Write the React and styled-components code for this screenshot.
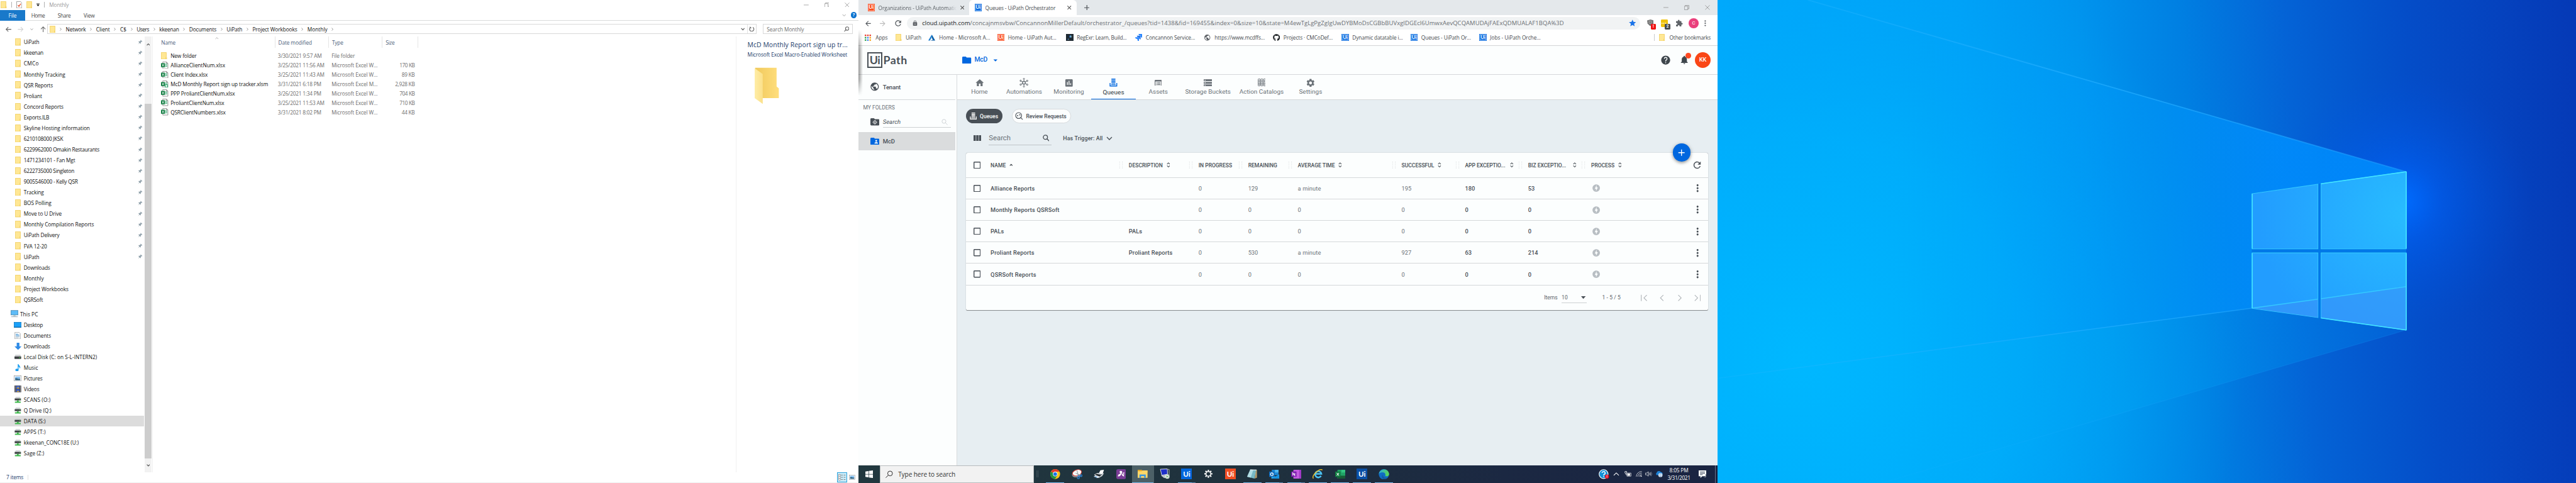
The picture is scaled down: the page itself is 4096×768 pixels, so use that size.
import React, { useLayoutEffect, useRef, useState } from 'react';
import styled, { createGlobalStyle, css } from 'styled-components';
import {
  MdHome, MdAssessment, MdSettings, MdPublic, MdArrowDropDown, MdHelp, MdNotifications,
  MdRefresh, MdMoreVert, MdOfflineBolt, MdLock, MdExtension, MdStar, MdArrowBack, MdArrowForward,
} from 'react-icons/md';
import { FaGithub } from 'react-icons/fa';

const SEGOE = '"Open Sans", "Noto Sans", sans-serif';
const ROBOTO = 'Roboto, "Liberation Sans", sans-serif';

const Global = createGlobalStyle`
  html, body { margin: 0; padding: 0; background: #fff; overflow: hidden; }
  * { box-sizing: border-box; }
  svg { display: block; flex: none; }
`;

const Stage = styled.div`
  zoom: 0.711111;
  display: flex;
  width: 5760px;
  height: 1080px;
  overflow: hidden;
  font-family: ${SEGOE};
  font-size: 11.7px;
  color: #111;
  white-space: nowrap;
`;

/* ---------- text that keeps a known width ---------- */

const FitBox = styled.span`
  display: inline-block;
  flex: none;
  width: ${(p) => p.$w}px;
  white-space: pre;
`;
const FitInner = styled.span`
  display: inline-block;
`;

function Fit({ w, children }) {
  const outer = useRef(null);
  const inner = useRef(null);
  const [spacing, setSpacing] = useState(0);
  useLayoutEffect(() => {
    const ratio = outer.current.getBoundingClientRect().width / inner.current.getBoundingClientRect().width;
    setSpacing((w - w / ratio) / String(children).length);
  }, [w, children]);
  return (
    <FitBox $w={w} ref={outer}>
      <FitInner ref={inner} style={{ letterSpacing: `${spacing.toFixed(3)}px` }}>{children}</FitInner>
    </FitBox>
  );
}

/* ---------- small drawings ---------- */

const FolderIcon = ({ w = 13, h = 16 }) => (
  <svg width={w} height={h} viewBox="0 0 13 16">
    <path d="M.5.5h11.4v10.2l.8 1v3.8H.5z" fill="#ffe794" stroke="#ecc64c" />
    <path d="M10.6 15V11.6l1.2-1" fill="none" stroke="#ecc64c" strokeWidth=".8" />
  </svg>
);
const ExcelIcon = ({ macro }) => (
  <svg width="16" height="16" viewBox="0 0 16 16">
    <path d="M4 .6h8l3.4 3.2v11.6H4z" fill="#fff" stroke="#777" strokeWidth="1.1" />
    <path d="M12 .6v3.2h3.4" fill="none" stroke="#777" />
    <path d="M10 5.5h4M10 8h4M10 10.5h4" stroke="#21a366" strokeWidth="1.2" />
    <rect y="3.5" width="9" height="9" fill="#107c41" />
    <path d="M2.4 5.4l4.2 5.2M6.6 5.4L2.4 10.6" stroke="#fff" strokeWidth="1.3" />
    {macro && <path d="M9.5 9.5h5v5.8h-5z" fill="#fff" stroke="#21a366" strokeWidth="1.6" />}
  </svg>
);
const PinIcon = () => (
  <svg width="11" height="11" viewBox="0 0 11 11">
    <path d="M6.2.4l4.2 3.8-1 .6-1-.2-1.7 2 .2 2-.9.7-2-1.8L.8 10.6 3.3 6.7 1.6 4.6l.8-.8 2.2.2 1.9-2z" fill="#8fa0aa" />
  </svg>
);
const PcIcon = () => (
  <svg width="17" height="16" viewBox="0 0 17 16">
    <rect x=".5" y="1" width="16" height="10" fill="#5ebcf8" stroke="#3f7fa6" />
    <path d="M8.5 11v2.5M5 12.8h7" stroke="#8aa" strokeWidth="1" />
    <path d="M1 15h15" stroke="#9ab" strokeWidth="1.4" />
  </svg>
);
const DesktopIcon = () => (
  <svg width="17" height="13" viewBox="0 0 17 13">
    <rect x=".5" y=".5" width="16" height="12" fill="#1aa0f8" stroke="#0a72b8" />
    <path d="M1 11.6h15" stroke="#064f86" strokeWidth="1.2" />
  </svg>
);
const DocIcon = () => (
  <svg width="14" height="16" viewBox="0 0 14 16">
    <path d="M1 .5h9l3 3v12H1z" fill="#fff" stroke="#8a8f94" />
    <path d="M3 4.5h5M3 6.5h8M3 8.5h8" stroke="#3a8fd0" strokeWidth="1.1" />
    <path d="M3 10.8h8M3 13h6" stroke="#8aa5b8" />
  </svg>
);
const DownIcon = () => (
  <svg width="16" height="16" viewBox="0 0 16 16">
    <path d="M5 0h6v8h5l-8 8-8-8h5z" fill="#2f8be6" />
  </svg>
);
const DiskIcon = () => (
  <svg width="15" height="10" viewBox="0 0 15 10">
    <path d="M2 0h11l2 4H0z" fill="#cfd2d4" />
    <rect y="4" width="15" height="5.6" rx="1" fill="#3c4043" />
    <rect x="10.5" y="6" width="2.4" height="1.6" fill="#55e055" />
  </svg>
);
const NetIcon = () => (
  <svg width="15" height="14" viewBox="0 0 15 14">
    <path d="M3 0h9l2 3.6H1z" fill="#d2d6d8" />
    <rect x=".5" y="3.6" width="14" height="4.4" fill="#3c4043" />
    <rect x="11" y="5" width="2" height="1.4" fill="#5e5" />
    <path d="M5.5 8h4v2.4H14v3H1v-3h4.5z" fill="#3fb84c" />
  </svg>
);
const MusicIcon = () => (
  <svg width="12" height="16" viewBox="0 0 12 16">
    <path d="M6 0h1.6c.4 2.5 4.4 4 4 8l-1.2 2.6c.4-3-1-4-2.6-4.6v7.2A3.6 2.8 0 1 1 6 10.6z" fill="#189df0" />
  </svg>
);
const PictureIcon = ({ w = 17, h = 13 }) => (
  <svg width={w} height={h} viewBox="0 0 17 13">
    <rect x=".5" y=".5" width="16" height="12" fill="#fff" stroke="#8d9296" />
    <rect x="3" y="2.5" width="11" height="8" fill="#86c0f2" />
    <path d="M3 10.5V6.5c3-2 5 2 11 1v3z" fill="#2c5f7c" />
  </svg>
);
const VideoIcon = () => (
  <svg width="15" height="15" viewBox="0 0 15 15">
    <rect width="15" height="15" fill="#3b3b42" />
    <rect x="3.5" y="1" width="8" height="6" fill="#4a6fd0" />
    <rect x="3.5" y="8" width="8" height="6" fill="#3a5fc8" />
    <path d="M5 7l3-4 3 4zM5 14l3-3 3 3z" fill="#d8a424" />
    <path d="M1.7 1v13M13.3 1v13" stroke="#ddd" strokeWidth="1.4" strokeDasharray="1.5 1.5" />
  </svg>
);
const Chevron = ({ s = 8, dir = 'down', c = '#555', sw = 1.4 }) => {
  const rot = { down: 0, up: 180, right: -90, left: 90 }[dir];
  return (
    <svg width={s} height={s} viewBox="0 0 10 10">
      <path d="M1 3l4 4 4-4" fill="none" stroke={c} strokeWidth={sw} transform={`rotate(${rot} 5 5)`} />
    </svg>
  );
};
const Arrow = ({ rot = 0, c = '#666', s = 13, sw = 1.5 }) => (
  <svg width={s} height={s} viewBox="0 0 13 13">
    <path d="M12.5 6.5H1.2M6 1.5l-5 5 5 5" fill="none" stroke={c} strokeWidth={sw} transform={`rotate(${rot} 6.5 6.5)`} />
  </svg>
);
const Minimise = () => <svg width="11" height="11" viewBox="0 0 11 11"><path d="M0 5.5h11" stroke="#888" /></svg>;
const Restore = () => (
  <svg width="11" height="11" viewBox="0 0 11 11">
    <path d="M.5 2.5h7.5v8H.5zM2.5 2.5v-2h8v8H8" fill="none" stroke="#888" />
  </svg>
);
const CloseX = ({ s = 11, c = '#888', sw = 1 }) => (
  <svg width={s} height={s} viewBox="0 0 11 11"><path d="M.5.5l10 10M10.5.5l-10 10" stroke={c} strokeWidth={sw} /></svg>
);
const Lens = ({ s = 13, c = '#555', sw = 1.4, flip }) => (
  <svg width={s} height={s} viewBox="0 0 14 14">
    <g transform={flip ? 'translate(14 0) scale(-1 1)' : undefined} fill="none" stroke={c} strokeWidth={sw}>
      <circle cx="5.6" cy="5.6" r="4.4" />
      <path d="M8.8 8.8l4.7 4.7" />
    </g>
  </svg>
);
const QueueIcon = ({ s = 18, c = '#0067df' }) => (
  <svg width={s} height={s} viewBox="0 0 18 18">
    <path d="M4.5 1h9M4.5 4h9M4.5 7h9M4.5 10h9" stroke={c} strokeWidth="2" />
    <path d="M1.5 10v6.5h15V10" fill="none" stroke={c} strokeWidth="2" />
    <path d="M4 13.3h10" stroke={c} strokeWidth="1.8" />
  </svg>
);
const AutomationIcon = () => (
  <svg width="20" height="21" viewBox="0 0 20 21" fill="none" stroke="#6b7278">
    <circle cx="10" cy="10.5" r="3.2" strokeWidth="2" />
    {[0, 60, 120, 180, 240, 300].map((a) => (
      <g key={a} transform={`rotate(${a} 10 10.5)`}>
        <circle cx="10" cy="2" r="1.5" strokeWidth="1.3" />
        <path d="M10 4v3" strokeWidth="1.3" />
      </g>
    ))}
  </svg>
);
const AssetIcon = () => (
  <svg width="16" height="14" viewBox="0 0 16 14">
    <rect x=".8" y=".8" width="14.4" height="12.4" rx="1" fill="none" stroke="#6b7278" strokeWidth="1.6" />
    <path d="M1 2.5h14" stroke="#6b7278" strokeWidth="2.4" />
    <path d="M3 6h1.5M3 8.3h1.5M3 10.6h1.5M5.5 6h7.5M5.5 8.3h7.5M5.5 10.6h7.5" stroke="#6b7278" strokeWidth="1.3" />
  </svg>
);
const BucketIcon = () => (
  <svg width="19" height="16" viewBox="0 0 19 16">
    <path d="M0 2.2h19M0 8h19M0 13.8h19" stroke="#6b7278" strokeWidth="4.2" />
    <path d="M2 2.2h2M2 8h2M2 13.8h2" stroke="#fff" strokeWidth="1.8" />
  </svg>
);
const CatalogIcon = () => (
  <svg width="18" height="17" viewBox="0 0 18 17" fill="none" stroke="#6b7278" strokeWidth="1.3">
    {[0, 6, 12].map((x) => (
      <g key={x}>
        <rect x={x + 0.7} y=".7" width="4.6" height="15.6" rx="1" />
        <path d={`M${x + 3} 3v6M${x + 1} 11h4`} />
        <circle cx={x + 3} cy="13.3" r=".6" />
      </g>
    ))}
  </svg>
);
const JiraIcon = () => (
  <svg width="16" height="16" viewBox="0 0 16 16">
    <path d="M7.5 0H16v8.5c-2 0-3.5-1.5-3.5-3.5V3.5H11c-2 0-3.5-1.5-3.5-3.5z" fill="#2684ff" />
    <path d="M3.8 3.8h8.4v8.4c-2 0-3.5-1.5-3.5-3.5V7.3H7.3c-2 0-3.5-1.5-3.5-3.5z" fill="#1f74ec" />
    <path d="M0 7.5h8.5V16C6.5 16 5 14.5 5 12.5V11H3.5C1.5 11 0 9.5 0 7.5z" fill="#2684ff" />
  </svg>
);
const AzureIcon = () => (
  <svg width="16" height="16" viewBox="0 0 16 16">
    <path d="M7.8 1.5L0 14.6h3.8l5-9.3z" fill="#1e7fd0" />
    <path d="M8.5 2.2l7 12.4H5l5.5-1.8-2.6-3.3z" fill="#0a5fa8" />
  </svg>
);
const AppsGrid = () => (
  <svg width="14" height="14" viewBox="0 0 14 14">
    {['#ea4335', '#ea4335', '#ea4335', '#34a853', '#4285f4', '#f5a623', '#34a853', '#4285f4', '#f5a623'].map((c, i) => (
      <rect key={i} x={(i % 3) * 5.3} y={Math.floor(i / 3) * 5.3} width="3.4" height="3.4" fill={c} />
    ))}
  </svg>
);
const BigFolder = () => (
  <svg width="56" height="84" viewBox="0 0 56 84">
    <defs>
      <linearGradient id="fBack" x1="0" x2="1"><stop offset="0" stopColor="#f0c95c" /><stop offset="1" stopColor="#ffde7c" /></linearGradient>
      <linearGradient id="fFront" x1="0" x2="1"><stop offset="0" stopColor="#ffeda6" /><stop offset="1" stopColor="#fbe08a" /></linearGradient>
    </defs>
    <path d="M1 1h48v42l5 4v22H1z" fill="url(#fBack)" />
    <path d="M0 2l18 13v67L0 69z" fill="url(#fFront)" />
  </svg>
);

/* ---------- UiPath favicon ---------- */

const UiBadge = styled.span`
  display: inline-flex;
  align-items: center;
  justify-content: center;
  flex: none;
  width: ${(p) => p.$s || 16}px;
  height: ${(p) => p.$s || 16}px;
  background: ${(p) => p.$c};
  color: #fff;
  font: 700 ${(p) => (p.$s || 16) * 0.68}px/1 Lato, sans-serif;
  ${(p) => !p.$s && css`box-shadow: inset 0 0 0 1px ${p.$c}, inset 0 0 0 2px #ffffffcc;`}
`;

/* ---------- File Explorer ---------- */

const Explorer = styled.section`
  display: flex;
  flex-direction: column;
  width: 1920px;
  height: 1080px;
  background: #fff;
  flex: none;
`;
const TitleBar = styled.div`
  display: flex;
  align-items: center;
  height: 23px;
  padding: 0 20px 2px 2px;
  color: #999;
`;
const QuickTools = styled.div`
  display: flex;
  align-items: center;
  gap: 10px;
  flex: 1;
`;
const Rule = styled.i`
  width: 1px;
  height: ${(p) => p.$h || 12}px;
  background: ${(p) => p.$c || '#b0b0b0'};
`;
const WindowButtons = styled.div`
  display: flex;
  gap: 35px;
`;
const Ribbon = styled.div`
  display: flex;
  align-items: center;
  height: 24px;
  padding-right: 4px;
  border-bottom: 1px solid #dadbdc;
  color: #444;
`;
const RibbonTab = styled.div`
  display: flex;
  align-items: center;
  justify-content: center;
  width: ${(p) => p.$w}px;
  height: 23px;
  ${(p) => p.$file && css`background: #1979ca; color: #fff;`}
`;
const HelpDot = styled.span`
  width: 14px;
  height: 14px;
  margin-left: 10px;
  border-radius: 50%;
  background: #0c73cf;
  color: #fff;
  font-size: 10px;
  font-weight: 700;
  line-height: 14px;
  text-align: center;
`;
const AddressRow = styled.div`
  display: flex;
  align-items: center;
  height: 35px;
  padding: 1px 13px 0 12px;
`;
const NavArrows = styled.div`
  display: flex;
  align-items: center;
  width: 94px;
  gap: 15px;
`;
const AddressBox = styled.div`
  display: flex;
  align-items: center;
  width: 1588px;
  height: 22px;
  padding-left: 4px;
  border: 1px solid #d9d9d9;
`;
const Crumbs = styled.div`
  display: flex;
  align-items: center;
  flex: 1;
`;
const CrumbSep = styled.span`
  display: flex;
  justify-content: center;
  width: 22.8px;
`;
const BoxButton = styled.span`
  display: flex;
  align-items: center;
  justify-content: center;
  width: 20px;
  height: 20px;
  ${(p) => p.$ruled && css`border-left: 1px solid #e3e3e3;`}
`;
const SearchBox = styled.div`
  display: flex;
  align-items: center;
  justify-content: space-between;
  width: 202px;
  height: 22px;
  margin-left: 13px;
  padding: 0 7px 0 8px;
  border: 1px solid #d9d9d9;
  color: #6d6d6d;
`;
const ExplorerBody = styled.div`
  display: flex;
  height: 974px;
`;
const Tree = styled.div`
  width: 323px;
  height: 974px;
`;
const TreeRow = styled.div`
  display: flex;
  align-items: center;
  width: 322px;
  height: 24px;
  padding: 0 3px 0 ${(p) => (p.$root ? 23 : 31)}px;
  margin-top: ${(p) => (p.$root ? 8 : 0)}px;
  background: ${(p) => (p.$active ? '#dcdcdc' : 'transparent')};
`;
const TreeIcon = styled.span`
  display: flex;
  justify-content: center;
  width: 18px;
  margin-right: 4px;
`;
const TreeLabel = styled.span`
  flex: 1;
`;
const ScrollBar = styled.div`
  display: flex;
  flex-direction: column;
  align-items: center;
  justify-content: space-between;
  width: 16px;
  height: 974px;
  padding: 14px 0 12px;
  margin-right: 2px;
  background: linear-gradient(#f2f2f2 0 151px, #cdcdcd 151px 944px, #f2f2f2 944px);
`;
const FileList = styled.div`
  width: 1304px;
  border-left: 1px solid #f0f0f0;
`;
const ListHead = styled.div`
  display: flex;
  height: 25px;
  padding-left: 11px;
  margin-bottom: 7px;
  color: #4c607a;
`;
const HeadCell = styled.div`
  display: flex;
  align-items: center;
  position: relative;
  width: ${(p) => p.$w}px;
  padding-left: 7px;
  border-right: 1px solid #e5e5e5;
`;
const SortMark = styled.span`
  position: absolute;
  top: -1px;
  left: 128px;
`;
const FileRow = styled.div`
  display: grid;
  grid-template-columns: 21px 240px 120px 120px 66px;
  align-items: center;
  height: 21px;
  padding-left: 18px;
  color: #6d6d6d;
  > :nth-child(2) { color: #111; }
  > :last-child { text-align: right; justify-self: end; }
`;
const Preview = styled.aside`
  width: 275px;
  padding: 8px 0 0 25px;
  border-left: 1px solid #f0f0f0;
  color: #1c3d6b;
`;
const PreviewTitle = styled.div`
  height: 22px;
  font-size: 14.6px;
  line-height: 20px;
`;
const PreviewType = styled.div`
  height: 38px;
  line-height: 21px;
`;
const PreviewThumb = styled.div`
  padding-left: 16px;
`;
const StatusBar = styled.div`
  display: flex;
  align-items: center;
  flex: 1;
  padding: 0 8px 0 14px;
  gap: 10px;
  color: #1c3d6b;
  border-bottom: 1px solid #eee;
`;
const ViewSwitch = styled.div`
  display: flex;
  align-items: center;
  gap: 4px;
  margin-left: auto;
`;
const ViewActive = styled.span`
  display: flex;
  align-items: center;
  justify-content: center;
  width: 22px;
  height: 22px;
  background: #cbecf9;
  border: 1px solid #2aa0da;
`;

const QUICK = [
  ['UiPath', 35], ['kkeenan', 44], ['CMCo', 34], ['Monthly Tracking', 93], ['QSR Reports', 65], ['Proliant', 41],
  ['Concord Reports', 89], ['Exports.ILB', 57], ['Skyline Hosting information', 148], ['6210108000 JKSK', 88],
  ['6229962000 Omakin Restaurants', 169], ['1471234101 - Fan Mgt', 115], ['6222735000 Singleton', 113],
  ['9005546000 - Kelly QSR', 121], ['Tracking', 45], ['BOS Polling', 62], ['Move to U Drive', 85],
  ['Monthly Compilation Reports', 157], ['UiPath Delivery', 80], ['FVA 12-20', 52], ['UiPath', 35],
  ['Downloads', 59], ['Monthly', 45], ['Project Workbooks', 100], ['QSRSoft', 43],
];
const THIS_PC = [
  ['Desktop', 43, DesktopIcon], ['Documents', 61, DocIcon], ['Downloads', 59, DownIcon],
  ['Local Disk (C: on S-L-INTERN2)', 164, DiskIcon], ['Music', 32, MusicIcon], ['Pictures', 42, PictureIcon],
  ['Videos', 35, VideoIcon], ['SCANS (O:)', 60, NetIcon], ['Q Drive (Q:)', 62, NetIcon], ['DATA (S:)', 49, NetIcon],
  ['APPS (T:)', 49, NetIcon], ['kkeenan_CONC18E (U:)', 123, NetIcon], ['Sage (Z:)', 46, NetIcon],
];
const CRUMBS = [
  ['Network', 45], ['Client', 31], ['C$', 14], ['Users', 28], ['kkeenan', 44], ['Documents', 61], ['UiPath', 35],
  ['Project Workbooks', 100], ['Monthly', 45],
];
const FILES = [
  ['New folder', 58, '3/30/2021 9:57 AM', 98, 'File folder', 52, '', 0, 'folder'],
  ['AllianceClientNum.xlsx', 122, '3/25/2021 11:56 AM', 104, 'Microsoft Excel W...', 103, '170 KB', 34],
  ['Client Index.xlsx', 83, '3/25/2021 11:43 AM', 104, 'Microsoft Excel W...', 103, '89 KB', 29],
  ['McD Monthly Report sign up tracker.xlsm', 218, '3/31/2021 6:18 PM', 97, 'Microsoft Excel M...', 103, '2,928 KB', 44, 'macro'],
  ['PPP ProliantClientNum.xlsx', 144, '3/26/2021 1:34 PM', 97, 'Microsoft Excel W...', 103, '704 KB', 34],
  ['ProliantClientNum.xlsx', 120, '3/25/2021 11:53 AM', 104, 'Microsoft Excel W...', 103, '710 KB', 34],
  ['QSRClientNumbers.xlsx', 123, '3/31/2021 8:02 PM', 97, 'Microsoft Excel W...', 103, '44 KB', 29],
];

function FileExplorer() {
  return (
    <Explorer>
      <TitleBar>
        <QuickTools>
          <FolderIcon />
          <Rule />
          <svg width="13" height="16" viewBox="0 0 13 16">
            <path d="M.6.6h8.8l3 3v11.8H.6z" fill="#fff" stroke="#777" />
            <path d="M3.5 8.5l2.3 3 4-6" fill="none" stroke="#e5502c" strokeWidth="1.8" />
          </svg>
          <FolderIcon />
          <svg width="7" height="7" viewBox="0 0 7 7"><path d="M0 .8h7M.8 3.3h5.4L3.5 6.5z" stroke="#111" strokeWidth=".9" fill="#111" /></svg>
          <Rule />
          <Fit w={44}>Monthly</Fit>
        </QuickTools>
        <WindowButtons><Minimise /><Restore /><CloseX /></WindowButtons>
      </TitleBar>
      <Ribbon>
        <RibbonTab $file $w={56}><Fit w={18}>File</Fit></RibbonTab>
        <RibbonTab $w={58}><Fit w={30}>Home</Fit></RibbonTab>
        <RibbonTab $w={59}><Fit w={29}>Share</Fit></RibbonTab>
        <RibbonTab $w={53}><Fit w={25}>View</Fit></RibbonTab>
        <QuickTools />
        <Chevron s={9} c="#999" />
        <HelpDot>?</HelpDot>
      </Ribbon>
      <AddressRow>
        <NavArrows>
          <Arrow />
          <Arrow rot={180} c="#d2d2d2" />
          <Chevron s={7} c="#777" />
          <Arrow rot={90} />
        </NavArrows>
        <AddressBox>
          <FolderIcon />
          <Crumbs>
            <CrumbSep><Chevron s={7} dir="right" c="#666" /></CrumbSep>
            {CRUMBS.map(([t, w]) => (
              <React.Fragment key={t}>
                <Fit w={w}>{t}</Fit>
                <CrumbSep><Chevron s={7} dir="right" c="#666" /></CrumbSep>
              </React.Fragment>
            ))}
          </Crumbs>
          <BoxButton><Chevron s={9} sw={2} c="#666" /></BoxButton>
          <BoxButton $ruled>
            <svg width="12" height="12" viewBox="0 0 12 12">
              <path d="M8.5 2A4.8 4.8 0 1 1 3 2.4" fill="none" stroke="#666" strokeWidth="1.6" />
              <path d="M2 0v4h4z" fill="#666" />
            </svg>
          </BoxButton>
        </AddressBox>
        <SearchBox><Fit w={83}>Search Monthly</Fit><Lens flip s={12} sw={1.8} c="#666" /></SearchBox>
      </AddressRow>
      <ExplorerBody>
        <Tree>
          {QUICK.map(([t, w], i) => (
            <TreeRow key={i}>
              <TreeIcon><FolderIcon /></TreeIcon>
              <TreeLabel><Fit w={w}>{t}</Fit></TreeLabel>
              {i < 21 && <PinIcon />}
            </TreeRow>
          ))}
          <TreeRow $root>
            <TreeIcon><PcIcon /></TreeIcon>
            <Fit w={40}>This PC</Fit>
          </TreeRow>
          {THIS_PC.map(([t, w, Icon]) => (
            <TreeRow key={t} $active={t === 'DATA (S:)'}>
              <TreeIcon><Icon /></TreeIcon>
              <Fit w={w}>{t}</Fit>
            </TreeRow>
          ))}
        </Tree>
        <ScrollBar><Chevron dir="up" sw={2} /><Chevron sw={2} /></ScrollBar>
        <FileList>
          <ListHead>
            <HeadCell $w={262}><Fit w={32}>Name</Fit><SortMark><Chevron dir="up" s={8} c="#777" sw={1} /></SortMark></HeadCell>
            <HeadCell $w={120}><Fit w={75}>Date modified</Fit></HeadCell>
            <HeadCell $w={120}><Fit w={25}>Type</Fit></HeadCell>
            <HeadCell $w={80}><Fit w={20}>Size</Fit></HeadCell>
          </ListHead>
          {FILES.map(([name, nw, date, dw, type, tw, size, sw, kind]) => (
            <FileRow key={name}>
              {kind === 'folder' ? <FolderIcon /> : <ExcelIcon macro={kind === 'macro'} />}
              <Fit w={nw}>{name}</Fit>
              <Fit w={dw}>{date}</Fit>
              <Fit w={tw}>{type}</Fit>
              {size ? <Fit w={sw}>{size}</Fit> : <i />}
            </FileRow>
          ))}
        </FileList>
        <Preview>
          <PreviewTitle><Fit w={224}>McD Monthly Report sign up tr...</Fit></PreviewTitle>
          <PreviewType><Fit w={223}>Microsoft Excel Macro-Enabled Worksheet</Fit></PreviewType>
          <PreviewThumb><BigFolder /></PreviewThumb>
        </Preview>
      </ExplorerBody>
      <StatusBar>
        <Fit w={38}>7 items</Fit>
        <Rule $c="#e2e2e2" />
        <ViewSwitch>
          <ViewActive>
            <svg width="16" height="14" viewBox="0 0 16 14">
              <rect x=".5" y=".5" width="4" height="13" fill="#fff" stroke="#888" />
              <path d="M1 4.5h3M1 9.5h3M6 2h4M6 7h4M6 12h4M12 2h4M12 7h4M12 12h4" stroke="#555" />
            </svg>
          </ViewActive>
          <PictureIcon w={14} h={11} />
        </ViewSwitch>
      </StatusBar>
    </Explorer>
  );
}

/* ---------- Browser ---------- */

const Monitor = styled.section`
  position: relative;
  display: flex;
  flex-direction: column;
  width: 1920px;
  height: 1080px;
  flex: none;
`;
const EdgeShadow = styled.div`
  position: absolute;
  left: 0;
  top: 66px;
  width: 10px;
  height: 148px;
  background: linear-gradient(90deg, #00000066, #00000000);
  mask-image: linear-gradient(transparent, #000 30%, #000 75%, transparent);
`;
const TabStrip = styled.div`
  display: flex;
  align-items: center;
  height: 34px;
  padding-right: 17px;
  background: #e4e8eb;
  color: #5a5f64;
`;
const BrowserTab = styled.div`
  display: flex;
  align-items: center;
  width: ${(p) => p.$w}px;
  height: 34px;
  padding: 0 11px 0 ${(p) => p.$pl}px;
  gap: 8px;
  ${(p) => p.$active && css`background: #fff; border-radius: 8px 8px 0 0; color: #45494d;`}
`;
const TabTitle = styled.span`
  flex: 1;
  overflow: hidden;
  ${(p) => p.$fade && css`mask-image: linear-gradient(90deg, #000 88%, transparent);`}
`;
const TabSpace = styled.div`
  flex: 1;
  padding-left: 17px;
`;
const Toolbar = styled.div`
  display: flex;
  align-items: center;
  height: 36px;
  background: #fff;
  padding-left: 12px;
`;
const ToolIcons = styled.div`
  display: flex;
  align-items: center;
  gap: 15px;
  width: 96px;
`;
const Omnibox = styled.div`
  display: flex;
  align-items: center;
  width: 1640px;
  height: 28px;
  padding: 0 8px 0 11px;
  border-radius: 14px;
  background: #f1f3f4;
  font-size: 13.3px;
  color: #6a6e73;
`;
const UrlText = styled.div`
  display: flex;
  flex: 1;
  margin-left: 9px;
  > :first-child { color: #202124; }
`;
const Extensions = styled.div`
  display: flex;
  align-items: center;
  gap: 16px;
  padding-left: 14px;
`;
const ExtIcon = styled.span`
  position: relative;
  display: flex;
  align-items: center;
  justify-content: center;
  width: 16px;
  height: 16px;
  border-radius: 2px;
  background: ${(p) => p.$bg || 'transparent'};
  color: #fff;
`;
const ExtBadge = styled.b`
  position: absolute;
  left: 9px;
  top: 10px;
  width: 12px;
  height: 12px;
  border-radius: 2px;
  background: ${(p) => p.$bg};
  font: 700 9px/12px ${ROBOTO};
  text-align: center;
`;
const Profile = styled.span`
  width: 22px;
  height: 22px;
  margin: 0 -3px;
  border-radius: 50%;
  background: #ea3f7c;
  color: #fff;
  font: 11px/22px ${ROBOTO};
  text-align: center;
`;
const Bookmarks = styled.div`
  display: flex;
  align-items: center;
  height: 33px;
  padding: 0 15px 4px 14px;
  background: #fff;
  border-bottom: 1px solid #d3d5d7;
  color: #45494d;
`;
const Bookmark = styled.div`
  display: flex;
  align-items: center;
  gap: ${(p) => p.$gap || 8}px;
  width: ${(p) => p.$w}px;
`;
const OtherBookmarks = styled.div`
  display: flex;
  align-items: center;
  gap: 10px;
  margin-left: auto;
`;
const RegexTile = styled.span`
  width: 16px;
  height: 16px;
  background: #1f2a33;
  color: #7cc4f4;
  font: 700 13px/16px ${ROBOTO};
  text-align: center;
`;

const AppHeader = styled.header`
  display: flex;
  align-items: center;
  height: 64px;
  padding: 0 15px 0 19px;
  background: #fcfefe;
  border-bottom: 1px solid #d5d8da;
`;
const Logo = styled.div`
  display: flex;
  align-items: center;
  gap: 2px;
  width: 213px;
  color: #484f56;
  font: 700 25px/1 Lato, sans-serif;
`;
const LogoBox = styled.span`
  display: flex;
  align-items: center;
  justify-content: center;
  width: 34px;
  height: 34px;
  border: 3px solid #484f56;
`;
const FolderPicker = styled.div`
  display: flex;
  align-items: center;
  flex: 1;
  gap: 7px;
  color: #0067df;
  font: 500 14.5px/1 ${ROBOTO};
`;
const HeaderActions = styled.div`
  display: flex;
  align-items: center;
  color: #3e464c;
`;
const Bell = styled.span`
  position: relative;
  margin: 0 13px 0 17px;
`;
const BellDot = styled.i`
  position: absolute;
  right: -4px;
  top: -4px;
  width: 12px;
  height: 12px;
  border-radius: 50%;
  background: #ff4a22;
`;
const Avatar = styled.span`
  width: 35px;
  height: 35px;
  border-radius: 50%;
  background: #fa4616;
  color: #fff;
  font: 500 13px/35px ${ROBOTO};
  text-align: center;
`;
const AppBody = styled.div`
  display: flex;
  height: 873px;
  background: #e7eef2;
  font-family: ${ROBOTO};
  color: #484f56;
`;
const Side = styled.nav`
  width: 220px;
  background: #fcfefe;
  border-right: 1px solid #d8dbdd;
  font-size: 13.3px;
  font-weight: 500;
`;
const SideRow = styled.div`
  display: flex;
  align-items: center;
  gap: 8px;
  width: 216px;
  height: ${(p) => p.$h}px;
  padding-left: 26px;
  ${(p) => p.$ruled && css`padding-left: 25px; gap: 7px; border-bottom: 1px solid #d5d8da;`}
  ${(p) => p.$active && css`margin-top: 7px; background: #dadcdd;`}
`;
const SideHeading = styled.div`
  height: 34px;
  padding-left: 10px;
  font-size: 12px;
  font-weight: 400;
  line-height: 34px;
  color: #6b7278;
`;
const SideSearch = styled.div`
  display: flex;
  align-items: center;
  justify-content: space-between;
  width: 152px;
  height: 24px;
  padding-right: 7px;
  border-bottom: 1px solid #cdd0d2;
  font-style: italic;
  font-weight: 400;
`;
const Main = styled.main`
  flex: 1;
`;
const NavTabs = styled.div`
  display: flex;
  height: 57px;
  background: #fcfefe;
  border-bottom: 1px solid #d5d8da;
`;
const NavTab = styled.div`
  display: flex;
  flex-direction: column;
  align-items: center;
  justify-content: space-between;
  width: ${(p) => p.$w}px;
  padding: 6px 0 ${(p) => (p.$active ? 5 : 7)}px;
  color: ${(p) => (p.$active ? '#273139' : '#6b7278')};
  font-size: 14px;
  line-height: 18px;
  ${(p) => p.$active && css`border-bottom: 2px solid #0067df;`}
`;
const NavIcon = styled.span`
  display: flex;
  align-items: center;
  height: 24px;
`;
const Pills = styled.div`
  display: flex;
  gap: 20px;
  padding: 20px 0 0 20px;
`;
const Pill = styled.div`
  display: flex;
  align-items: center;
  gap: 7px;
  height: 32px;
  width: ${(p) => p.$w}px;
  padding-left: 8px;
  border-radius: 16px;
  font-size: 12px;
  font-weight: 500;
  color: ${(p) => (p.$dark ? '#fff' : '#484f56')};
  background: ${(p) => (p.$dark ? '#484f56' : '#fcfefe')};
  ${(p) => !p.$dark && css`border: 1px solid #d7dadd; padding-left: 6px;`}
`;
const Filters = styled.div`
  display: flex;
  align-items: center;
  height: 50px;
  margin: 8px 0 8px 37px;
`;
const FilterSearch = styled.div`
  display: flex;
  align-items: center;
  justify-content: space-between;
  width: 140px;
  height: 32px;
  margin: 0 26px 0 17px;
  padding-right: 5px;
  border-bottom: 1px solid #bfc5c9;
  font-size: 16px;
  color: #6b7278;
`;
const TriggerFilter = styled.div`
  display: flex;
  align-items: center;
  gap: 8px;
  font-size: 12.5px;
  font-weight: 500;
`;
const Card = styled.div`
  position: relative;
  width: 1660px;
  height: 352px;
  margin-left: 20px;
  background: #fcfefe;
  border-radius: 4px;
  box-shadow: 0 1px 1px #00000066, 0 0 2px #0000002e;
`;
const TableRow = styled.div`
  display: grid;
  grid-template-columns: 38px 309px 156px 111px 111px 232px 142px 141px 141px 225px 26px;
  align-items: center;
  height: ${(p) => (p.$head ? 56 : 48)}px;
  padding-left: 17px;
  border-bottom: 1px solid #d5d8da;
  font-size: ${(p) => (p.$head ? 12 : 13)}px;
  font-weight: ${(p) => (p.$head ? 500 : 400)};
`;
const HeadLabel = styled.div`
  display: flex;
  align-items: center;
  gap: ${(p) => p.$gap || 5}px;
`;
const Grip = styled.svg`
  margin: 0 ${(p) => 12 - (p.$gap || 5)}px 0 -22px;
`;
const Cell = styled.div`
  padding-left: ${(p) => p.$pl || 0}px;
  font-weight: ${(p) => (p.$strong ? 500 : 400)};
  color: ${(p) => (p.$strong ? '#484f56' : '#6b7278')};
`;
const TableFoot = styled.div`
  display: flex;
  align-items: center;
  justify-content: flex-end;
  height: 56px;
  padding-right: 17px;
  font-size: 12px;
  color: #5b6268;
`;
const PageSize = styled.div`
  display: flex;
  align-items: center;
  justify-content: space-between;
  width: 56px;
  height: 24px;
  margin: 0 35px 0 9px;
  padding-right: 3px;
  border-bottom: 1px solid #cdd0d2;
`;
const Pager = styled.div`
  display: flex;
  gap: 23.5px;
  margin-left: 45px;
`;
const Fab = styled.button`
  position: absolute;
  right: 40px;
  top: -21px;
  display: flex;
  align-items: center;
  justify-content: center;
  width: 40px;
  height: 40px;
  padding: 0;
  border: 0;
  border-radius: 50%;
  background: #0067df;
  color: #fff;
  box-shadow: 0 3px 6px #0000004d, 0 1px 10px #0000002b;
`;

const BOOKMARKS = [
  [<AzureIcon />, 'Home - Microsoft A...', 114],
  [<UiBadge $c="#fa4616">Ui</UiBadge>, 'Home - UiPath Aut...', 108],
  [<RegexTile>.*</RegexTile>, 'RegExr: Learn, Build...', 111],
  [<JiraIcon />, 'Concannon Service...', 110],
  [<MdPublic size={16} color="#5f6368" />, 'https://www.mcdffs...', 112],
  [<FaGithub size={16} color="#1b1f23" />, 'Projects · CMCoDef...', 110],
  [<UiBadge $c="#0067df">Ui</UiBadge>, 'Dynamic datatable i...', 113],
  [<UiBadge $c="#0067df">Ui</UiBadge>, 'Queues - UiPath Or...', 111],
  [<UiBadge $c="#0067df">Ui</UiBadge>, 'Jobs - UiPath Orche...', 113],
];
const NAV = [
  ['Home', 37, 100, <MdHome size={22} />],
  ['Automations', 80, 100, <AutomationIcon />],
  ['Monitoring', 68, 100, <MdAssessment size={22} />],
  ['Queues', 48, 100, <QueueIcon />],
  ['Assets', 43, 100, <AssetIcon />],
  ['Storage Buckets', 102, 122, <BucketIcon />],
  ['Action Catalogs', 99, 118, <CatalogIcon />],
  ['Settings', 52, 101, <MdSettings size={22} />],
];
const HEADS = [
  ['NAME', 34, 'up', 8], ['DESCRIPTION', 76, 'both', 8], ['IN PROGRESS', 75], ['REMAINING', 65],
  ['AVERAGE TIME', 83, 'both', 8], ['SUCCESSFUL', 73, 'both', 8], ['APP EXCEPTIO...', 90, 'both', 11],
  ['BIZ EXCEPTIO...', 85, 'both', 15], ['PROCESS', 52, 'both', 8],
];
const ROWS = [
  ['Alliance Reports', 99, '', 0, '0', '129', 'a minute', '195', '180', '53'],
  ['Monthly Reports QSRSoft', 154, '', 0, '0', '0', '0', '0', '0', '0'],
  ['PALs', 30, 'PALs', 30, '0', '0', '0', '0', '0', '0'],
  ['Proliant Reports', 98, 'Proliant Reports', 98, '0', '530', 'a minute', '927', '63', '214'],
  ['QSRSoft Reports', 102, '', 0, '0', '0', '0', '0', '0', '0'],
];
const PAGER_PATHS = [
  'M1 1v14M13.5 1.5L7 8l6.5 6.5',
  'M11 1.5L4.500 8l6.5 6.5',
  'M5 1.5L11.500 8 5 14.5',
  'M15 1v14M2.5 1.5L9 8l-6.5 6.5',
];

const SortIcon = ({ kind }) => (
  <svg width="8" height="12" viewBox="0 0 8 12" fill="none" stroke="#484f56" strokeWidth="1.5">
    {kind === 'both' ? <path d="M1 4.3l3-3 3 3M1 7.7l3 3 3-3" /> : <path d="M1 7.6l3-3 3 3" />}
  </svg>
);
const GripDots = ({ gap }) => (
  <Grip width="10" height="15" viewBox="0 0 10 15" $gap={gap} fill="#dcdfe1">
    {[1, 5.5, 10, 14].map((y) => [2, 8].map((x) => <circle key={`${x}-${y}`} cx={x} cy={y} r="1" />))}
  </Grip>
);
const CheckBox = () => (
  <svg width="16" height="16" viewBox="0 0 16 16"><rect x="1" y="1" width="14" height="14" rx="1" fill="none" stroke="#484f56" strokeWidth="2" /></svg>
);

function QueueTable() {
  return (
    <Card>
      <TableRow $head>
        <CheckBox />
        {HEADS.map(([t, w, sort, gap], i) => (
          <HeadLabel key={t} $gap={gap}>
            {i > 0 && <GripDots gap={gap} />}
            <Fit w={w}>{t}</Fit>
            {sort && <SortIcon kind={sort} />}
          </HeadLabel>
        ))}
        <MdRefresh size={24} />
      </TableRow>
      {ROWS.map(([name, nw, desc, dw, ...nums]) => (
        <TableRow key={name}>
          <CheckBox />
          <Cell $strong><Fit w={nw}>{name}</Fit></Cell>
          <Cell $strong>{desc && <Fit w={dw}>{desc}</Fit>}</Cell>
          {nums.map((n, i) => (
            <Cell key={i} $strong={i > 3}>{n.length > 4 ? <Fit w={52}>{n}</Fit> : n}</Cell>
          ))}
          <Cell $pl={2}><MdOfflineBolt size={20} color="#b8bec3" /></Cell>
          <MdMoreVert size={26} />
        </TableRow>
      ))}
      <TableFoot>
        <Fit w={30}>Items</Fit>
        <PageSize><Fit w={14}>10</Fit><svg width="10" height="6" viewBox="0 0 10 6"><path d="M0 0h10L5 6z" fill="#484f56" /></svg></PageSize>
        <Fit w={41}>1 - 5 / 5</Fit>
        <Pager>
          {PAGER_PATHS.map((d) => (
            <svg key={d} width="16" height="16" viewBox="0 0 16 16" fill="none" stroke="#b0b5b9" strokeWidth="1.6"><path d={d} /></svg>
          ))}
        </Pager>
      </TableFoot>
      <Fab><svg width="16" height="16" viewBox="0 0 16 16"><path d="M8 1v14M1 8h14" stroke="#fff" strokeWidth="2" /></svg></Fab>
    </Card>
  );
}

function Browser() {
  return (
    <>
      <TabStrip>
        <BrowserTab $w={247} $pl={20}>
          <UiBadge $c="#fa4616">Ui</UiBadge>
          <TabTitle $fade><Fit w={176}>Organizations - UiPath Automatic</Fit></TabTitle>
          <CloseX s={9} c="#555" sw={1.8} />
        </BrowserTab>
        <BrowserTab $active $w={240} $pl={12}>
          <UiBadge $c="#0067df">Ui</UiBadge>
          <TabTitle><Fit w={157}>Queues - UiPath Orchestrator</Fit></TabTitle>
          <CloseX s={9} c="#555" sw={1.8} />
        </BrowserTab>
        <TabSpace><svg width="12" height="12" viewBox="0 0 12 12"><path d="M6 0v12M0 6h12" stroke="#4d5257" strokeWidth="1.7" /></svg></TabSpace>
        <WindowButtons><Minimise /><Restore /><CloseX /></WindowButtons>
      </TabStrip>
      <Toolbar>
        <ToolIcons><MdArrowBack size={18} color="#50555a" /><MdArrowForward size={18} color="#bbb" /><MdRefresh size={20} color="#50555a" /></ToolIcons>
        <Omnibox>
          <MdLock size={14} color="#5f6368" />
          <UrlText>
            <Fit w={107}>cloud.uipath.com</Fit>
            <Fit w={1328}>/concajnmsvbw/ConcannonMillerDefault/orchestrator_/queues?tid=1438&amp;fid=169455&amp;index=0&amp;size=10&amp;state=M4ewTgLgPgZglgUwDYBMoDsCGBbBUVxgIDGEcl6UmwxAevQCQAMUDAjFAExQDMUALAF1BQA%3D</Fit>
          </UrlText>
          <MdStar size={19} color="#1a73e8" />
        </Omnibox>
        <Extensions>
          <ExtIcon>
            <svg width="15" height="16" viewBox="0 0 15 16"><path d="M0 2l7.5-2L15 2v6l-4 6H6L1 9z" fill="#777" /><circle cx="7" cy="6" r="3" fill="none" stroke="#bbb" /></svg>
            <ExtBadge $bg="#f01414">!</ExtBadge>
          </ExtIcon>
          <ExtIcon $bg="#f0c20c">
            <svg width="12" height="3" viewBox="0 0 12 3"><path d="M0 1.5h12" stroke="#fff" strokeWidth="2" strokeDasharray="2 2" /></svg>
            <ExtBadge $bg="#484c50">2</ExtBadge>
          </ExtIcon>
          <MdExtension size={17} color="#5f6368" />
          <Profile>C</Profile>
          <svg width="4" height="14" viewBox="0 0 4 14" fill="#5f6368"><circle cx="2" cy="2" r="1.6" /><circle cx="2" cy="7" r="1.6" /><circle cx="2" cy="12" r="1.6" /></svg>
        </Extensions>
      </Toolbar>
      <Bookmarks>
        <Bookmark $w={69} $gap={10}><AppsGrid /><Fit w={27}>Apps</Fit></Bookmark>
        <Bookmark $w={73} $gap={9}><FolderIcon /><Fit w={35}>UiPath</Fit></Bookmark>
        {BOOKMARKS.map(([icon, t, w]) => (
          <Bookmark key={t} $w={154}>{icon}<Fit w={w}>{t}</Fit></Bookmark>
        ))}
        <OtherBookmarks><Rule $h={16} $c="#c8cacc" /><FolderIcon /><Fit w={92}>Other bookmarks</Fit></OtherBookmarks>
      </Bookmarks>
      <AppHeader>
        <Logo><LogoBox><Fit w={23}>Ui</Fit></LogoBox><Fit w={54}>Path</Fit></Logo>
        <FolderPicker>
          <svg width="20" height="16" viewBox="0 0 20 16"><path d="M2 0h6l2 2h8a2 2 0 0 1 2 2v10a2 2 0 0 1-2 2H2a2 2 0 0 1-2-2V2a2 2 0 0 1 2-2z" fill="#0067df" /></svg>
          <Fit w={29}>McD</Fit>
          <MdArrowDropDown size={22} />
        </FolderPicker>
        <HeaderActions>
          <MdHelp size={24} />
          <Bell><MdNotifications size={23} /><BellDot /></Bell>
          <Avatar>KK</Avatar>
        </HeaderActions>
      </AppHeader>
      <AppBody>
        <Side>
          <SideRow $h={56} $ruled><MdPublic size={22} /><Fit w={40}>Tenant</Fit></SideRow>
          <SideHeading><Fit w={71}>MY FOLDERS</Fit></SideHeading>
          <SideRow $h={32}>
            <svg width="20" height="16" viewBox="0 0 20 16">
              <path d="M2 0h6l2 2h8a2 2 0 0 1 2 2v10a2 2 0 0 1-2 2H2a2 2 0 0 1-2-2V2a2 2 0 0 1 2-2z" fill="#484f56" />
              <circle cx="10" cy="9" r="3.4" fill="none" stroke="#fff" strokeWidth="1.2" /><circle cx="10" cy="9" r="1.2" fill="#fff" />
              <path d="M10 4v2M10 12v2M5 9h2M13 9h2" stroke="#fff" />
            </svg>
            <SideSearch><Fit w={40}>Search</Fit><Lens s={14} c="#c8cdd0" sw={1.2} /></SideSearch>
          </SideRow>
          <SideRow $h={40} $active>
            <svg width="20" height="16" viewBox="0 0 20 16">
              <path d="M2 0h6l2 2h8a2 2 0 0 1 2 2v10a2 2 0 0 1-2 2H2a2 2 0 0 1-2-2V2a2 2 0 0 1 2-2z" fill="#0067df" />
              <circle cx="13" cy="7" r="2" fill="#fff" /><path d="M9 13c0-4 8-4 8 0z" fill="#fff" />
            </svg>
            <Fit w={27}>McD</Fit>
          </SideRow>
        </Side>
        <Main>
          <NavTabs>
            {NAV.map(([t, w, tab, icon]) => (
              <NavTab key={t} $w={tab} $active={t === 'Queues'}><NavIcon>{icon}</NavIcon><Fit w={w}>{t}</Fit></NavTab>
            ))}
          </NavTabs>
          <Pills>
            <Pill $dark $w={82}><QueueIcon s={16} c="#fff" /><Fit w={41}>Queues</Fit></Pill>
            <Pill $w={133}>
              <svg width="18" height="18" viewBox="0 0 18 18" fill="none" stroke="#484f56" strokeWidth="1.6">
                <circle cx="8" cy="8" r="6.6" /><path d="M12.5 12.5L17 17M5.5 10V8h1.5M9 6h2v2" />
              </svg>
              <Fit w={90}>Review Requests</Fit>
            </Pill>
          </Pills>
          <Filters>
            <svg width="17" height="13" viewBox="0 0 17 13"><path d="M0 0h5v13H0zM6 0h5v13H6zM12 0h5v13h-5z" fill="#484f56" /></svg>
            <FilterSearch><Fit w={49}>Search</Fit><Lens s={15} sw={1.8} c="#484f56" /></FilterSearch>
            <TriggerFilter><Fit w={89}>Has Trigger: All</Fit><Chevron s={14} c="#484f56" sw={1.3} /></TriggerFilter>
          </Filters>
          <QueueTable />
        </Main>
      </AppBody>
    </>
  );
}

/* ---------- Taskbar ---------- */

const Bar = styled.footer`
  display: flex;
  height: 40px;
  background: linear-gradient(90deg, #21383f, #1f313d 45%, #1b2842 75%, #1a2442);
  color: #fff;
`;
const Start = styled.div`
  display: flex;
  align-items: center;
  justify-content: center;
  width: 48px;
`;
const TaskSearch = styled.div`
  display: flex;
  align-items: center;
  gap: 11px;
  width: 344px;
  height: 40px;
  padding-left: 11px;
  background: #f2f2f2;
  border: 1px solid #b8bcbe;
  color: #333;
  font-size: 14.2px;
`;
const TaskGrip = styled.div`
  width: 23px;
  padding: 12px 0 0 6px;
`;
const Task = styled.div`
  display: flex;
  align-items: center;
  justify-content: center;
  width: 49px;
  height: 40px;
  ${(p) => p.$open && css`
    background: linear-gradient(#76b9ed, #76b9ed) 50% 100% / ${p.$open === 'focus' ? 48 : 41}px 2px no-repeat;
  `}
  ${(p) => p.$open === 'group' && css`
    background: linear-gradient(90deg, #76b9ed 0 31px, #5b87ae 31px) 50% 100% / 40px 2px no-repeat;
  `}
  ${(p) => p.$open === 'focus' && css`background-color: #4c6067;`}
`;
const Tray = styled.div`
  display: flex;
  align-items: center;
  margin-left: auto;
  padding-right: 4px;
`;
const TrayIcon = styled.span`
  display: flex;
  justify-content: center;
  width: ${(p) => p.$w}px;
`;
const Clock = styled.div`
  display: flex;
  flex-direction: column;
  align-items: center;
  width: 62px;
  line-height: 17px;
`;
const EndRule = styled.i`
  width: 1px;
  height: 40px;
  margin-left: 6px;
  background: #69748a;
`;

const TaskIcons = {
  chrome: (
    <svg width="22" height="22" viewBox="0 0 22 22">
      <circle cx="11" cy="11" r="11" fill="#fbc116" />
      <path d="M11 11L1.5 5.5A11 11 0 0 1 20.5 5.5H11z" fill="#e33b2e" />
      <path d="M11 11L1.5 5.5A11 11 0 0 0 10.5 22L15.8 13.7z" fill="#229342" />
      <circle cx="11" cy="11" r="5.2" fill="#fff" /><circle cx="11" cy="11" r="4.1" fill="#1a73e8" />
    </svg>
  ),
  snip: (
    <svg width="24" height="23" viewBox="0 0 24 23">
      <ellipse cx="11" cy="11" rx="10.5" ry="7" transform="rotate(-18 11 11)" fill="#8c9296" />
      <ellipse cx="12" cy="8" rx="10.5" ry="6.6" transform="rotate(-18 12 8)" fill="#f6f6f6" stroke="#d63b32" strokeWidth="1.3" />
      <path d="M12 3l3 12M9 9l9 4" stroke="#8f979d" strokeWidth="1.4" />
      <circle cx="15" cy="19" r="2.4" fill="none" stroke="#2f86d8" strokeWidth="1.7" /><circle cx="21" cy="14.5" r="2.1" fill="none" stroke="#2f86d8" strokeWidth="1.7" />
      <path d="M14 13l3 4 3-3" stroke="#2f86d8" strokeWidth="1.6" fill="none" />
    </svg>
  ),
  printer: (
    <svg width="24" height="19" viewBox="0 0 24 19">
      <path d="M11 9l4-8 8-1-3 10z" fill="#fff" /><path d="M1 11l7-4h4l-1 3 7 1 2-4 3 1-4 6-7 4H6z" fill="#c6cbcf" />
      <path d="M3 11l4-2 10 3-4 3z" fill="#23282c" /><path d="M0 15l4-1.500 9 1.500-4 3.500z" fill="#e8f2fa" /><path d="M3 15.500l5 1" stroke="#2f86d8" strokeWidth="1.300" />
    </svg>
  ),
  purple: (
    <svg width="22" height="22" viewBox="0 0 22 22">
      <rect width="22" height="22" rx="4" fill="#7a3d96" />
      <path d="M9 4c5-1 5 3 2.500 7-2 4-5 6-8 5 0-4 3-5 6-6C8 8 6 5 9 4z" fill="#fff" />
      <path d="M12 11c3-.6 6 2 5.500 5-3 .6-5-2-5.500-5z" fill="#fff" />
      <path d="M14 9.500l4-2M15 11h3.500" stroke="#fff" strokeWidth="1.500" />
    </svg>
  ),
  explorer: (
    <svg width="22" height="18" viewBox="0 0 22 18">
      <path d="M0 0h9l1.500 2H22v4H0z" fill="#e8a824" /><path d="M0 3h9l1.500-1.500H22V18H0z" fill="#ffd768" />
      <path d="M4 18v-7.500h14V18h-3.500v-4h-7v4z" fill="#3a97e0" />
    </svg>
  ),
  remote: (
    <svg width="23" height="24" viewBox="0 0 23 24">
      <path d="M1.500 1.500L17 .8l.5 12L4.500 15z" fill="#1f2fc8" stroke="#d8dde4" strokeWidth="1.400" /><path d="M3 16l13-2.500 4 5-10 3z" fill="#c2c8ce" />
      <path d="M18 1.500l3 .8v13" stroke="#8d969e" strokeWidth="1.800" fill="none" />
      <circle cx="17" cy="18" r="5" fill="#e3e9e3" /><path d="M14.500 16l2.200 2-2.200 2M19.500 16l-2.200 2 2.200 2" stroke="#3a9a40" strokeWidth="1.200" fill="none" />
    </svg>
  ),
  gear: (
    <svg width="18" height="18" viewBox="0 0 18 18" fill="none" stroke="#fff">
      <circle cx="9" cy="9" r="5.2" strokeWidth="2" />
      {[0, 45, 90, 135, 180, 225, 270, 315].map((a) => (
        <path key={a} d="M9 0v3.200" strokeWidth="3" transform={`rotate(${a} 9 9)`} />
      ))}
    </svg>
  ),
  notepad: (
    <svg width="23" height="22" viewBox="0 0 23 22">
      <path d="M19 1l3 1v17l-5 2z" fill="#b59b6a" /><path d="M7 1l13 .6-3.500 19.400L0 17z" fill="#78b9c6" />
      <path d="M7 1l7 .3L8 19 0 17z" fill="#b2dde4" /><path d="M7 .6l14 .6v1.600L6.500 2.200z" fill="#e6edf0" />
    </svg>
  ),
  outlook: (
    <svg width="23" height="20" viewBox="0 0 23 20">
      <path d="M6 0h15v12H6z" fill="#1b86d4" /><path d="M13 0h8v6h-8z" fill="#50b8f0" /><path d="M5 10l9 5 9-5v10H5z" fill="#28a8ea" /><path d="M5 20l18-9v9z" fill="#1490df" />
      <rect y="4" width="12" height="12" rx="1" fill="#0f6cbd" /><circle cx="6" cy="10" r="3" fill="none" stroke="#fff" strokeWidth="1.7" />
    </svg>
  ),
  onenote: (
    <svg width="23" height="20" viewBox="0 0 23 20">
      <rect x="5" width="18" height="20" rx="1.5" fill="#c45ce0" /><path d="M18 0h5v20h-5z" fill="#a23bc6" /><rect y="4" width="12" height="12" rx="1" fill="#7719aa" />
      <path d="M3.8 13V7l4.4 6V7" fill="none" stroke="#fff" strokeWidth="1.5" />
    </svg>
  ),
  ie: (
    <svg width="24" height="22" viewBox="0 0 24 22">
      <path d="M19 15a7 7 0 1 1 .8-4.5H7" fill="none" stroke="#4cc3f4" strokeWidth="3.6" />
      <path d="M2 21C-3 14 16-3 22 2" fill="none" stroke="#f5c528" strokeWidth="2" />
    </svg>
  ),
  excel: (
    <svg width="23" height="20" viewBox="0 0 23 20">
      <rect x="5" width="18" height="20" rx="1.5" fill="#21a366" /><path d="M14 0h9v6.5h-9z" fill="#33c481" /><path d="M5 13h18v7H5z" fill="#185c37" /><path d="M14 6.5h9V13h-9z" fill="#21a366" />
      <rect y="4" width="12" height="12" rx="1" fill="#107c41" /><path d="M3.5 7l5 6M8.5 7l-5 6" stroke="#fff" strokeWidth="1.5" />
    </svg>
  ),
  edge: (
    <svg width="24" height="23" viewBox="0 0 24 23">
      <defs><linearGradient id="edg" x1="0" x2="1" y2=".3"><stop offset="0" stopColor="#27a5e8" /><stop offset="1" stopColor="#57d559" /></linearGradient></defs>
      <circle cx="12" cy="11.5" r="11.5" fill="#0f6cc4" />
      <path d="M.5 11A11.6 11.6 0 0 1 23.5 10c.5 5-4 6.5-7 5.8-2.5-.6-1-1.8-1.2-3.8C15 6 4 5.5.5 11z" fill="url(#edg)" />
      <path d="M9.5 12c-1 6 6 9 11.5 6.5-1.5 2.5-5 4.5-8 4.5-6-1-7-8-3.5-11z" fill="#1f3a5c" opacity=".35" />
    </svg>
  ),
};
const TASKS = [
  ['chrome', true], ['snip'], ['printer'], ['purple'], ['explorer', 'focus'], ['remote'], ['#0067df', 'group'], ['gear'],
  ['#f04e23'], ['notepad', true], ['outlook', 'group'], ['onenote', 'group'], ['ie', true], ['excel', true], ['#0a4fa5', true], ['edge', true],
];

function Taskbar() {
  return (
    <Bar>
      <Start>
        <svg width="17" height="17" viewBox="0 0 17 17" fill="#fff"><path d="M0 2.4l7-1V8H0zM8 1.2L17 0v8H8zM0 9h7v6.6l-7-1zM8 9h9v8l-9-1.2z" /></svg>
      </Start>
      <TaskSearch>
        <Lens flip s={17} c="#222" sw={1.1} />
        <Fit w={128}>Type here to search</Fit>
      </TaskSearch>
      <TaskGrip><svg width="4" height="16" viewBox="0 0 4 16"><path d="M.5 0v16M3.5 0v16" stroke="#5d6e76" strokeWidth=".8" /></svg></TaskGrip>
      {TASKS.map(([k, open]) => (
        <Task key={k} $open={open}>
          {k[0] === '#' ? <UiBadge $s={24} $c={k}>Ui</UiBadge> : TaskIcons[k]}
        </Task>
      ))}
      <Tray>
        <TrayIcon $w={26}>
          <svg width="24" height="22" viewBox="0 0 24 22">
            <circle cx="11" cy="11" r="10" fill="#1191d8" stroke="#fff" strokeWidth="1.6" />
            <path d="M7.5 8.5a3.5 3.2 0 1 1 5 3c-1.3.7-1.5 1.3-1.5 2.500M11 15.5v2" fill="none" stroke="#fff" strokeWidth="2" />
            <circle cx="18.5" cy="16.5" r="4.5" fill="#e81123" /><path d="M18.5 13.5v4M18.5 18.5v1" stroke="#fff" strokeWidth="1.2" />
          </svg>
        </TrayIcon>
        <TrayIcon $w={29}><Chevron dir="up" s={14} c="#fff" sw={1.1} /></TrayIcon>
        <TrayIcon $w={22}>
          <svg width="16" height="13" viewBox="0 0 16 13" fill="none" stroke="#fff"><path d="M5.5 4.5h9v7h-9z" /><path d="M7 6h5v4H7z" fill="#fff" /><path d="M1 1h4v3.5H1zM2 0v1M4 0v1M3 4.5V8h2.5" /></svg>
        </TrayIcon>
        <TrayIcon $w={26}>
          <svg width="14" height="13" viewBox="0 0 14 13" fill="none" stroke="#fff"><circle cx="12" cy="11.5" r="1" fill="#fff" /><path d="M8 12.5A5 5 0 0 1 13.5 8M4.5 12.5A8.5 8.5 0 0 1 13.5 4.5M1 12.5A12 12 0 0 1 13.5 1" /></svg>
        </TrayIcon>
        <TrayIcon $w={20}>
          <svg width="16" height="13" viewBox="0 0 16 13" fill="none" stroke="#fff"><path d="M.5 4.5h3L7 1.5v10l-3.5-3h-3zM9 4.5q1.5 2 0 4M11 3q3 3.5 0 7" /><path d="M13 1.5q4 5 0 10" opacity=".5" /></svg>
        </TrayIcon>
        <TrayIcon $w={26}>
          <svg width="17" height="14" viewBox="0 0 17 14"><path d="M3 9a3 3 0 0 1 0-5 5 5 0 0 1 9-2 4 4 0 0 1 3 7z" fill="#1d80d6" /><circle cx="11.5" cy="9" r="4.5" fill="#e8f2fb" /><path d="M9 8a3 3 0 0 1 5 0M14 10a3 3 0 0 1-5 0" fill="none" stroke="#1d60b0" /></svg>
        </TrayIcon>
        <Clock><Fit w={42}>8:05 PM</Fit><Fit w={51}>3/31/2021</Fit></Clock>
        <TrayIcon $w={44}>
          <svg width="17" height="17" viewBox="0 0 17 17"><path d="M0 0h17v13H8l-4 4v-4H0z" fill="#fff" /><path d="M3 3.5h11M3 6.5h11M3 9.5h6" stroke="#1b2742" strokeWidth="1.2" /><path d="M15.5 9a3.5 3.5 0 1 1-4 6 4 4 0 0 0 4-6z" fill="#fff" stroke="#1b2742" strokeWidth=".8" /></svg>
        </TrayIcon>
        <EndRule />
      </Tray>
    </Bar>
  );
}

/* ---------- Desktop wallpaper ---------- */

const Desktop = styled.svg`
  width: 1920px;
  height: 1080px;
`;

function Wallpaper() {
  return (
    <Desktop viewBox="0 0 1920 1080" preserveAspectRatio="none">
      <defs>
        <linearGradient id="sky" x1="0" x2="1" y1=".04" y2="0">
          <stop offset="0" stopColor="#00aaff" />
          <stop offset=".28" stopColor="#00a2f9" />
          <stop offset=".42" stopColor="#0094ee" />
          <stop offset=".54" stopColor="#007fe2" />
          <stop offset=".66" stopColor="#0463d6" />
          <stop offset=".8" stopColor="#044dc8" />
          <stop offset="1" stopColor="#0539b6" />
        </linearGradient>
        <radialGradient id="cyan" gradientUnits="userSpaceOnUse" cx="180" cy="800" r="1000">
          <stop offset="0" stopColor="#00b8ff" /><stop offset=".5" stopColor="#00b0fb" stopOpacity=".7" /><stop offset="1" stopColor="#00a0f0" stopOpacity="0" />
        </radialGradient>
        <radialGradient id="glow" gradientUnits="userSpaceOnUse" cx="1530" cy="450" r="290">
          <stop offset="0" stopColor="#006cff" /><stop offset=".3" stopColor="#0062f8" stopOpacity=".55" /><stop offset="1" stopColor="#0050d8" stopOpacity="0" />
        </radialGradient>
        <linearGradient id="beam" gradientUnits="userSpaceOnUse" x1="400" y1="0" x2="1540" y2="0">
          <stop offset="0" stopColor="#00a4ff" stopOpacity="0" /><stop offset=".5" stopColor="#0096f8" stopOpacity=".55" /><stop offset=".75" stopColor="#008cfc" stopOpacity=".9" /><stop offset="1" stopColor="#0090ff" stopOpacity=".8" />
        </linearGradient>
        <linearGradient id="low" gradientUnits="userSpaceOnUse" x1="300" y1="900" x2="1500" y2="700">
          <stop offset="0" stopColor="#00b4ff" stopOpacity="0" /><stop offset=".5" stopColor="#00a0f2" stopOpacity=".6" /><stop offset="1" stopColor="#0070e0" stopOpacity=".55" />
        </linearGradient>
        <linearGradient id="ray" gradientUnits="userSpaceOnUse" x1="0" y1="0" x2="1540" y2="0">
          <stop offset="0" stopColor="#2ab8ff" stopOpacity=".2" /><stop offset=".6" stopColor="#22acff" stopOpacity=".75" /><stop offset="1" stopColor="#22a0ff" stopOpacity=".5" />
        </linearGradient>
        <radialGradient id="pane" gradientUnits="userSpaceOnUse" cx="1540" cy="480" r="330">
          <stop offset="0" stopColor="#28bcff" /><stop offset="1" stopColor="#229dff" />
        </radialGradient>
      </defs>
      <rect width="1920" height="1080" fill="url(#sky)" />
      <rect width="1920" height="1080" fill="url(#cyan)" />
      <rect width="1920" height="1080" fill="url(#glow)" />
      <path d="M202 0L1540 384 1195 433V689L0 846V0z" fill="url(#beam)" />
      <path d="M0 846L1195 689 1540 738 367 1080H0z" fill="url(#low)" />
      <path d="M202 0L1540 384" stroke="url(#ray)" strokeWidth="2.5" />
      <path d="M0 846L1195 689" stroke="url(#ray)" strokeWidth="2" />
      <path d="M367 1080L1540 738" stroke="url(#ray)" strokeWidth="1.5" opacity=".3" />
      <path d="M1195 433L1540 384V738L1195 690z" fill="#0078e8" />
      <g fill="url(#pane)" stroke="#35c8ff" strokeWidth="1.5">
        <path d="M1195.5 433L1342.5 412V556.5H1195.5z" />
        <path d="M1349.5 411L1540 384V556.5H1349.5z" />
        <path d="M1195.5 565.5H1342.5V710L1195.5 689.5z" />
        <path d="M1349.5 565.5H1540V738L1349.5 711z" />
      </g>
      <path d="M1195.5 689L1342.5 669V710z" fill="#3a92f8" opacity=".6" />
      <path d="M1349.5 668L1540 641V738L1349.5 711z" fill="#3a92f8" opacity=".6" />
      <path d="M1195 689L1342 669M1349.5 668L1540 641" stroke="#35c8ff" strokeWidth="2" />
      <path d="M1540 384V556M1540 566V738M1195.5 433V556M1195.5 566V689M1349 411L1540 384M1349 711L1540 738" stroke="#45e6ff" strokeWidth="2.2" fill="none" />
    </Desktop>
  );
}

export default function App() {
  return (
    <>
      <Global />
      <Stage>
        <FileExplorer />
        <Monitor>
          <Browser />
          <Taskbar />
          <EdgeShadow />
        </Monitor>
        <Wallpaper />
      </Stage>
    </>
  );
}
